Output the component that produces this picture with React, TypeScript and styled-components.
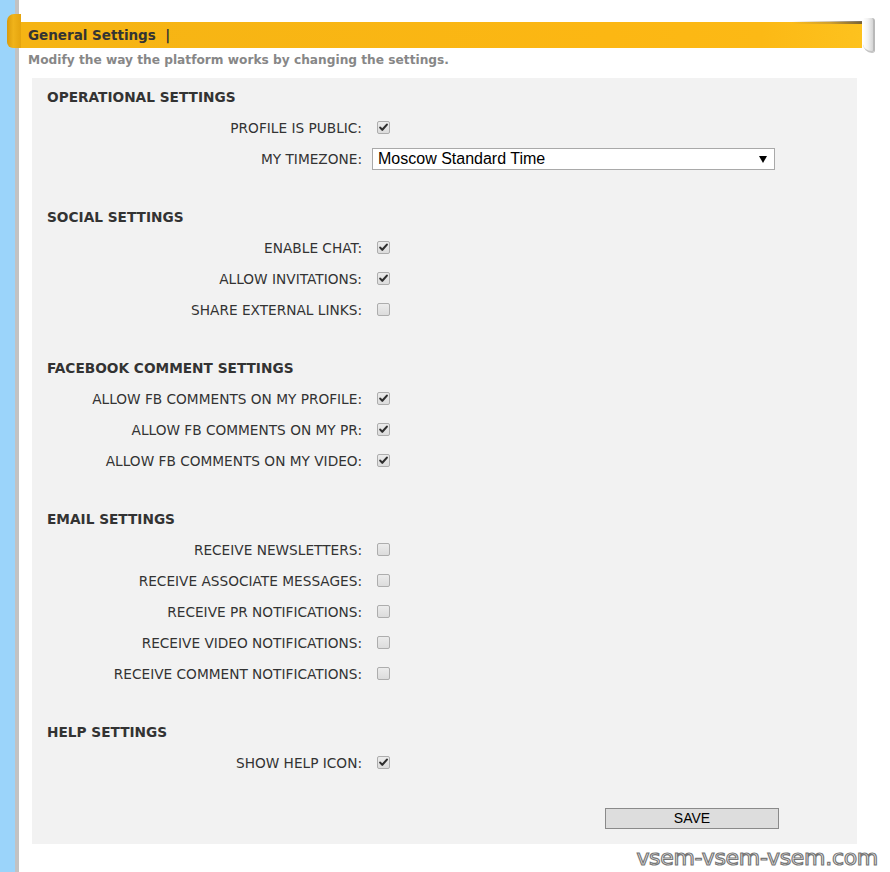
import React, { useState } from "react";
import styled, { createGlobalStyle } from "styled-components";

/* ─────────────── Types ─────────────── */
interface Field {
  id: string;
  label: string;
  kind: "check" | "select";
  value?: boolean;
}

interface Section {
  title: string;
  fields: Field[];
}

const SECTIONS: Section[] = [
  {
    title: "OPERATIONAL SETTINGS",
    fields: [
      { id: "public", label: "PROFILE IS PUBLIC:", kind: "check", value: true },
      { id: "tz", label: "MY TIMEZONE:", kind: "select" },
    ],
  },
  {
    title: "SOCIAL SETTINGS",
    fields: [
      { id: "chat", label: "ENABLE CHAT:", kind: "check", value: true },
      { id: "invites", label: "ALLOW INVITATIONS:", kind: "check", value: true },
      { id: "links", label: "SHARE EXTERNAL LINKS:", kind: "check", value: false },
    ],
  },
  {
    title: "FACEBOOK COMMENT SETTINGS",
    fields: [
      { id: "fbProfile", label: "ALLOW FB COMMENTS ON MY PROFILE:", kind: "check", value: true },
      { id: "fbPr", label: "ALLOW FB COMMENTS ON MY PR:", kind: "check", value: true },
      { id: "fbVideo", label: "ALLOW FB COMMENTS ON MY VIDEO:", kind: "check", value: true },
    ],
  },
  {
    title: "EMAIL SETTINGS",
    fields: [
      { id: "news", label: "RECEIVE NEWSLETTERS:", kind: "check", value: false },
      { id: "assoc", label: "RECEIVE ASSOCIATE MESSAGES:", kind: "check", value: false },
      { id: "prNote", label: "RECEIVE PR NOTIFICATIONS:", kind: "check", value: false },
      { id: "videoNote", label: "RECEIVE VIDEO NOTIFICATIONS:", kind: "check", value: false },
      { id: "commentNote", label: "RECEIVE COMMENT NOTIFICATIONS:", kind: "check", value: false },
    ],
  },
  {
    title: "HELP SETTINGS",
    fields: [{ id: "help", label: "SHOW HELP ICON:", kind: "check", value: true }],
  },
];

/* ─────────────── Styled Components ─────────────── */
const GlobalStyle = createGlobalStyle`
  html, body { margin: 0; padding: 0; background: #fff; }
  body { font-family: "DejaVu Sans", Verdana, sans-serif; }
`;

const Page = styled.div`
  display: flex;
  min-height: 100vh;
  overflow: hidden;
`;

const SideStrip = styled.div`
  flex: 0 0 15px;
  background: #9bd4fa;
  border-right: 4px solid #c2c2c2;
`;

const Main = styled.div`
  flex: 1;
  display: flex;
  flex-direction: column;
`;

const Banner = styled.div`
  position: relative;
  margin: 22px 28px 0 1px;
  height: 26px;
  background: linear-gradient(to right, #f5b414 0%, #fcb713 70%, #fcb915 88%, #fdc21e 100%);

  /* left ribbon curl */
  &::before {
    content: "";
    position: absolute;
    left: -13px;
    top: -8px;
    width: 14px;
    height: 34px;
    border-radius: 7px 0 0 6px;
    background: linear-gradient(to right, #d99a0b 0%, #f0b31a 45%, #e5a40e 100%);
  }

  /* right paper curl */
  &::after {
    content: "";
    position: absolute;
    right: -13px;
    top: -4px;
    width: 10px;
    height: 33px;
    border-radius: 1px 3px 3px 9px;
    border-right: 2px solid #b9b9b9;
    border-bottom: 2px solid #c4c4c4;
    background: linear-gradient(to right, #ffffff 0%, #f1f1f1 50%, #d5d5d5 100%);
  }
`;

const TornEdge = styled.div`
  position: absolute;
  right: 0;
  top: -1px;
  width: 70px;
  height: 3px;
  background: linear-gradient(to right, rgba(255, 255, 255, 0) 0%, rgba(150, 120, 70, 0.45) 55%, rgba(95, 80, 55, 0.85) 100%);
`;

const BannerTitle = styled.h2`
  margin: 0;
  padding-left: 8px;
  font-size: 13.5px;
  font-weight: bold;
  line-height: 26px;
  color: #333;
  white-space: pre;
`;

const Subtitle = styled.p`
  margin: 4px 0 0 9px;
  font-size: 12.2px;
  font-weight: bold;
  line-height: 16px;
  color: #878787;
`;

const Panel = styled.form`
  margin: 10px 33px 0 13px;
  padding: 7px 15px 15px;
  background: #f2f2f2;
  display: flex;
  flex-direction: column;
  gap: 31px;
`;

const SectionBox = styled.section`
  display: flex;
  flex-direction: column;
`;

const SectionTitle = styled.h3`
  margin: 0 0 2px;
  font-size: 13.7px;
  font-weight: bold;
  line-height: 25px;
  color: #333;
`;

const FieldGrid = styled.div`
  display: grid;
  grid-template-columns: 315px 1fr;
  grid-auto-rows: 31px;
  column-gap: 10px;
  align-items: center;
`;

const Label = styled.label`
  text-align: right;
  font-size: 13.7px;
  color: #333;
  white-space: nowrap;
`;

const CheckBox = styled.span<{ $on: boolean }>`
  display: inline-flex;
  align-items: center;
  justify-content: center;
  width: 11px;
  height: 11px;
  margin-left: 5px;
  border: 1px solid #adadad;
  border-radius: 2px;
  background: linear-gradient(#ececec, #dcdcdc);
  cursor: pointer;

  svg {
    visibility: ${({ $on }) => ($on ? "visible" : "hidden")};
  }
`;

const SelectWrap = styled.div`
  position: relative;
  width: 403px;
  height: 22px;
`;

const NativeSelect = styled.select`
  appearance: none;
  width: 100%;
  height: 100%;
  margin: 0;
  padding: 0 20px 0 5px;
  border: 1px solid #a9a9a9;
  border-radius: 0;
  background: #fff;
  font-family: "Liberation Sans", Arial, sans-serif;
  font-size: 16px;
  color: #000;
  outline: none;
`;

const Arrow = styled.svg`
  position: absolute;
  right: 8px;
  top: 8px;
  pointer-events: none;
`;

const ButtonRow = styled.div`
  display: flex;
  padding-left: 558px;
  margin-top: -1.5px;
`;

const SaveButton = styled.button`
  width: 174px;
  height: 21px;
  padding: 0;
  border: 1px solid #8a8a8a;
  background: #dddddd;
  font-family: "Liberation Sans", Arial, sans-serif;
  font-size: 14px;
  color: #000;
  cursor: pointer;
`;

const Watermark = styled.div`
  align-self: flex-end;
  margin: 2px 12px 0 0;
  font-family: "DejaVu Sans", Verdana, sans-serif;
  font-size: 22px;
  line-height: 24px;
  color: #fff;
  -webkit-text-stroke: 1.2px #777;
  letter-spacing: -0.3px;
`;

/* ─────────────── Component ─────────────── */
const App: React.FC = () => {
  const [values, setValues] = useState<Record<string, boolean>>(() => {
    const init: Record<string, boolean> = {};
    SECTIONS.forEach(s => s.fields.forEach(f => { if (f.kind === "check") init[f.id] = !!f.value; }));
    return init;
  });
  const [tz, setTz] = useState("Moscow Standard Time");

  const toggle = (id: string) => setValues(prev => ({ ...prev, [id]: !prev[id] }));

  return (
    <Page>
      <GlobalStyle />
      <SideStrip />
      <Main>
        <Banner>
          <TornEdge />
          <BannerTitle>{"General Settings  |"}</BannerTitle>
        </Banner>
        <Subtitle>Modify the way the platform works by changing the settings.</Subtitle>

        <Panel onSubmit={e => e.preventDefault()}>
          {SECTIONS.map(section => (
            <SectionBox key={section.title}>
              <SectionTitle>{section.title}</SectionTitle>
              <FieldGrid>
                {section.fields.map(field => (
                  <React.Fragment key={field.id}>
                    <Label htmlFor={field.id}>{field.label}</Label>
                    {field.kind === "check" ? (
                      <div>
                        <CheckBox
                          id={field.id}
                          role="checkbox"
                          aria-checked={values[field.id]}
                          $on={values[field.id]}
                          onClick={() => toggle(field.id)}
                        >
                          <svg width="11" height="11" viewBox="0 0 11 11">
                            <path d="M2.2 5.6 L4.3 7.8 L8.9 2.6" fill="none" stroke="#2f2f2f" strokeWidth="2.1" strokeLinecap="round" strokeLinejoin="round" />
                          </svg>
                        </CheckBox>
                      </div>
                    ) : (
                      <SelectWrap>
                        <NativeSelect id={field.id} value={tz} onChange={e => setTz(e.target.value)}>
                          <option>Moscow Standard Time</option>
                          <option>GMT Standard Time</option>
                          <option>Pacific Standard Time</option>
                        </NativeSelect>
                        <Arrow width="8" height="7" viewBox="0 0 8 7">
                          <path d="M0 0 H8 L4 7 Z" fill="#000" />
                        </Arrow>
                      </SelectWrap>
                    )}
                  </React.Fragment>
                ))}
              </FieldGrid>
            </SectionBox>
          ))}
          <ButtonRow>
            <SaveButton type="submit">SAVE</SaveButton>
          </ButtonRow>
        </Panel>

        <Watermark>vsem-vsem-vsem.com</Watermark>
      </Main>
    </Page>
  );
};

export default App;
